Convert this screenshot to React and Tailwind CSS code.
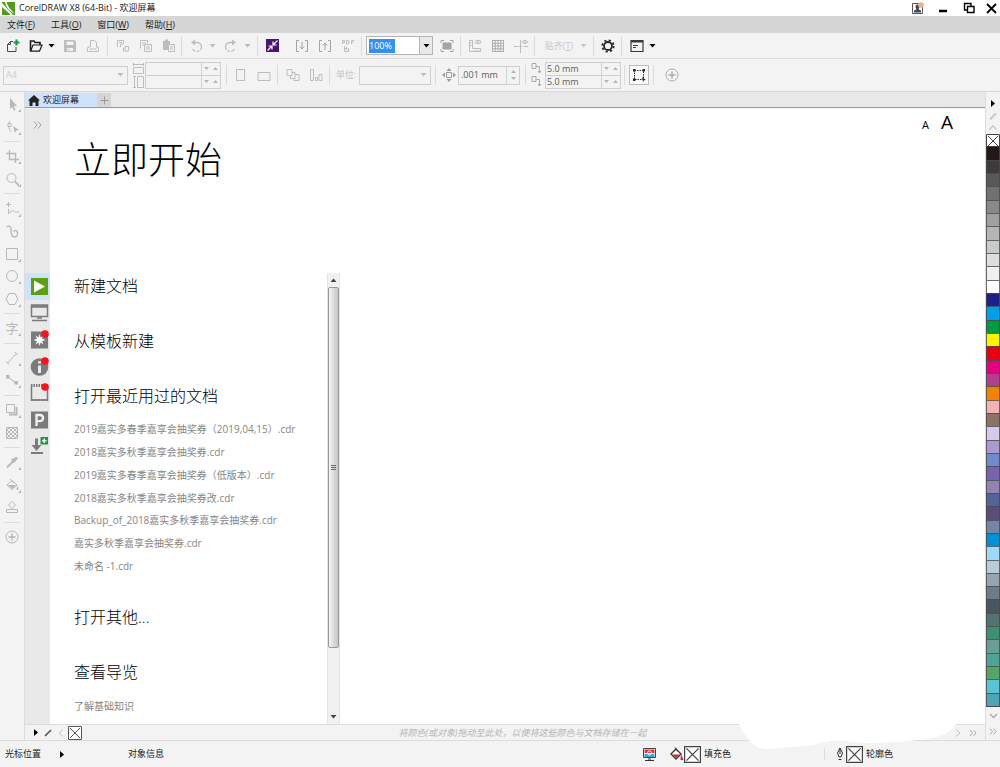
import React from "react";

const UI = "font-['Open_Sans','Noto_Sans_CJK_SC',sans-serif]";

function Svg({ w = 16, h = 16, box, className = "", children, sw = 1 }) {
  return (
    <svg
      width={w}
      height={h}
      viewBox={box || `0 0 ${w} ${h}`}
      className={`shrink-0 ${className}`}
      fill="none"
      stroke="currentColor"
      strokeWidth={sw}
      aria-hidden="true"
    >
      {children}
    </svg>
  );
}

const Caret = ({ className = "" }) => (
  <Svg w={7} h={4} className={className}>
    <path d="M0.5 0h6L3.5 3.5z" fill="currentColor" stroke="none" />
  </Svg>
);

const Sep = ({ className = "" }) => <span className={`w-px h-5 shrink-0 bg-[#dcdcdc] ${className}`} />;

function Tool({ label, className = "", tone = "text-[#bdbdbd]", children }) {
  return (
    <button type="button" aria-label={label} className={`w-[23px] h-6 shrink-0 flex items-center justify-center ${tone} ${className}`}>
      {children}
    </button>
  );
}

function CaretButton({ label, className = "" }) {
  return (
    <button type="button" aria-label={label} className={`w-2 h-6 shrink-0 flex items-center justify-center ${className}`}>
      <Caret />
    </button>
  );
}

function CrossBox({ size = 14, className = "" }) {
  return (
    <Svg w={size} h={size} box="0 0 14 14" className={`bg-white ${className}`}>
      <path d="M0.5 0.5h13v13h-13z" />
      <path d="M2 2l10 10M12 2L2 12" />
    </Svg>
  );
}

function TitleBar() {
  return (
    <header className="h-4 bg-white flex items-center justify-between">
      <div className="flex items-center gap-1 pl-[2px]">
        <Svg w={13} h={13}>
          <path d="M0 0h13v13H0z" fill="#4f9a1f" stroke="none" />
          <path d="M0 1l11 12H9L0 5z" fill="#fff" stroke="none" />
          <path d="M3 0h1.500c1 4 4 8 8 11.500C7.500 9.500 4 5 3 0z" fill="#fff" stroke="none" />
        </Svg>
        <h1 className="text-[9px] leading-4 text-[#1c1c1c]">CorelDRAW X8 (64-Bit) - 欢迎屏幕</h1>
      </div>
      <div className="flex items-center text-black">
        <button type="button" aria-label="登录" className="w-[26px] flex justify-center">
          <Svg w={13} h={13}>
            <path d="M1.5 1.5h10v10h-10z" stroke="#555" />
            <path d="M4.5 4.5a2 2 0 1 1 4 0c0 1-.8 1.700-.8 3l2.300 1v2H3v-2l2.300-1c0-1.300-.8-2-.8-3z" fill="#3d4a55" stroke="none" />
            <circle cx="10" cy="3" r="2.800" fill="#f0b08e" stroke="none" />
          </Svg>
        </button>
        <button type="button" aria-label="最小化" className="w-[26px] flex justify-center">
          <Svg w={10} h={14}><path d="M1 10h8" strokeWidth="2.500" /></Svg>
        </button>
        <button type="button" aria-label="还原" className="w-[26px] flex justify-center">
          <Svg w={12} h={12}>
            <path d="M4 8H1.500V1.500H8V4" strokeWidth="1.400" />
            <path d="M4.500 4.500h6.500v6h-6.500z" strokeWidth="1.400" />
          </Svg>
        </button>
        <button type="button" aria-label="关闭" className="w-[18px] flex justify-center">
          <Svg w={11} h={11}><path d="M1 1l9 9M10 1l-9 9" strokeWidth="1.800" /></Svg>
        </button>
      </div>
    </header>
  );
}

const MENUS = [["文件", "F"], ["工具", "O"], ["窗口", "W"], ["帮助", "H"]];

function MenuBar() {
  return (
    <nav className="h-[17px] bg-[#d6d6d6] flex items-center gap-4 pl-[7px] text-[9px] text-[#1c1c1c]">
      {MENUS.map(([name, key]) => (
        <button type="button" key={name} className="leading-4">
          {name}(<u>{key}</u>)
        </button>
      ))}
    </nav>
  );
}

function StandardBar() {
  return (
    <div className="h-[26px] bg-[#f3f3f3] border-b border-[#dcdcdc] flex items-center pl-px text-[#bdbdbd]">
      <Tool label="新建" tone="text-[#4a4a4a]">
        <Svg w={14} h={14}>
          <path d="M7 2.500H4.500L1.500 5.500v7h8.500V8M4.500 2.500v3h-3" />
          <path d="M10.500 0.500v6M7.500 3.500h6" stroke="#1f9d47" strokeWidth="2.200" />
        </Svg>
      </Tool>
      <Tool label="打开" tone="text-[#1c1c1c]">
        <Svg w={14} h={14}>
          <path d="M1.500 12V2h3.500l1 1.500h5V6" strokeWidth="1.600" />
          <path d="M1.500 12.200L4 6h9l-2.500 6.200z" strokeWidth="1.200" />
        </Svg>
      </Tool>
      <CaretButton label="最近打开" className="text-black" />
      <Tool label="保存" className="ml-[3px]">
        <Svg w={14} h={14}>
          <path d="M1 1h10.500L13 2.500V13H1z" fill="currentColor" stroke="none" />
          <path d="M3.500 2.500h7v3.500h-7zM4 9h6v3H4z" fill="#f3f3f3" stroke="none" />
          <path d="M5 10.500h2" />
        </Svg>
      </Tool>
      <Tool label="打印">
        <Svg w={14} h={14}>
          <path d="M4.500 8V1.500h4l2 2V8M4.500 8H2l-.5 1.500v3h11v-3L12 8h-1.500M3.500 10h7" />
        </Svg>
      </Tool>
      <Sep className="ml-[3px] mr-[3px]" />
      <Tool label="剪切">
        <Svg w={14} h={14}>
          <path d="M1.500 8V1.500h6V5h-3v3M3 3.500h3M9 7.500h3.500V12H9zM7.500 9v4" />
        </Svg>
      </Tool>
      <Tool label="复制">
        <Svg w={14} h={14}>
          <path d="M1.500 9.500v-8h7v3M3 4h4M3 6h2M5.500 5.500h7v7h-7zM7 8h4M7 10h4" />
        </Svg>
      </Tool>
      <Tool label="粘贴">
        <Svg w={14} h={14}>
          <path d="M1 2h7v3H6v6H1zM3 0.500h3V2H3z" fill="currentColor" stroke="none" />
          <path d="M6.500 5.500h6v7h-6zM8 8h3M8 10h3" />
        </Svg>
      </Tool>
      <Sep className="ml-px mr-[2px]" />
      <Tool label="撤销">
        <Svg w={14} h={14}>
          <path d="M4 3.500h4a4.500 4.500 0 0 1 0 9c-2 0-3.500-.8-4.500-2.500" strokeDasharray="14 1.500 2 1.500" strokeWidth="1.300" />
          <path d="M6 0.500v6l-4-3z" fill="currentColor" stroke="none" />
        </Svg>
      </Tool>
      <CaretButton label="撤销列表" className="ml-px" />
      <Tool label="重做" className="ml-[3px]">
        <Svg w={14} h={14}>
          <path d="M10 3.500H6a4.500 4.500 0 0 0 0 9c2 0 3.500-.8 4.500-2.500" strokeDasharray="14 1.500 2 1.500" strokeWidth="1.300" />
          <path d="M8 0.500v6l4-3z" fill="currentColor" stroke="none" />
        </Svg>
      </Tool>
      <CaretButton label="重做列表" className="ml-px" />
      <Sep className="ml-[6px] mr-[3px]" />
      <Tool label="搜索内容">
        <Svg w={13} h={13}>
          <path d="M0 0h13v13H0z" fill="#4b1472" stroke="none" />
          <path d="M11.500 1.500L7.500 5.500M7 2.500V6h3.500M1.500 11.500l4-4M6 10.500V7H2.500" stroke="#fff" strokeWidth="1.200" />
        </Svg>
      </Tool>
      <Tool label="导入" className="ml-[6px]" tone="text-[#a3a3a3]">
        <Svg w={14} h={14}><path d="M4 1.500H1.500v11H4M10 1.500h2.500v11H10M7 3v7M4.800 7.500L7 10l2.200-2.500" /></Svg>
      </Tool>
      <Tool label="导出" tone="text-[#a3a3a3]">
        <Svg w={14} h={14}><path d="M4 1.500H1.500v11H4M10 1.500h2.500v11H10M7 11V4M4.800 6.500L7 4l2.200 2.500" /></Svg>
      </Tool>
      <Tool label="发布为 PDF">
        <Svg w={14} h={14}>
          <path d="M1.500 5V1.500h2v2h-2M5.500 1v4h1.500l1-1V2L7 1.500H5.500M10.500 5V1.500H13M10.500 3.200H12.500M3.500 7v5.500h4V9M5.500 8v3M3.500 9.500h2" />
        </Svg>
      </Tool>
      <Sep className="ml-[2px] mr-1" />
      <div className="flex h-[19px] w-[67px] border border-[#b5b5b5] bg-white">
        <div className="flex flex-1 items-center">
          <input
            type="text"
            aria-label="缩放级别"
            defaultValue="100%"
            className="ml-[2px] h-[14px] w-[26px] bg-[#3390f2] p-0 text-[9px] leading-[14px] text-white outline-none"
          />
        </div>
        <button type="button" aria-label="缩放列表" className="flex w-[13px] items-center justify-center border-l border-[#b5b5b5] bg-[#e9e9e9] text-black">
          <Caret />
        </button>
      </div>
      <Tool label="全屏预览" className="ml-[2px]" tone="text-[#a3a3a3]">
        <Svg w={14} h={14}>
          <path d="M3 4h8v6H3z" fill="currentColor" />
          <path d="M1 4V1.500h3M10 1.500h3V4M13 10v2.500h-3M4 12.500H1V10" />
        </Svg>
      </Tool>
      <Sep className="ml-[2px] mr-[2px]" />
      <Tool label="标尺">
        <Svg w={14} h={14}>
          <path d="M1.500 1.500h3v8h8v3h-11zM2 4h1.500M2 6.500h1.500M6 11v1M8.500 11v1M11 11v1" />
          <ellipse cx="10" cy="3" rx="3" ry="1.700" /><circle cx="10" cy="3" r=".6" />
        </Svg>
      </Tool>
      <Tool label="网格" tone="text-[#adadad]">
        <Svg w={14} h={14}>
          <path d="M1.500 1v12M4.250 1v12M7 1v12M9.750 1v12M12.500 1v12M1 1.500h12M1 4.250h12M1 7h12M1 9.750h12M1 12.500h12" />
        </Svg>
      </Tool>
      <Tool label="辅助线">
        <Svg w={14} h={14}>
          <path d="M6.500 1v13M0 7.500h4M5 7.500h3M9.500 7.500H14" />
          <ellipse cx="11" cy="3" rx="2.500" ry="1.500" /><circle cx="11" cy="3" r=".5" />
        </Svg>
      </Tool>
      <Sep className="ml-[2px] mr-[7px]" />
      <button type="button" className="flex items-center gap-1 text-[9px] text-[#c8c8c8]">
        <span className="w-[34px] whitespace-nowrap">贴齐(<u>T</u>)</span>
        <Caret />
      </button>
      <Sep className="ml-[6px] mr-[2px]" />
      <Tool label="选项" tone="text-[#2a2a2a]">
        <Svg w={14} h={14}>
          <circle cx="7" cy="7" r="4" strokeWidth="1.800" />
          <circle cx="7" cy="7" r="5.700" strokeWidth="1.800" strokeDasharray="2.200 2.277" />
        </Svg>
      </Tool>
      <Sep className="ml-[2px] mr-[3px]" />
      <Tool label="应用程序启动器" tone="text-[#3a3a3a]">
        <Svg w={14} h={14}>
          <path d="M1 1.500h12v11H1z" strokeWidth="1.200" />
          <path d="M1 2.500h12" strokeWidth="2" />
          <path d="M3 6.500h5M3 8.500h3" />
        </Svg>
      </Tool>
      <CaretButton label="启动器列表" className="text-black" />
    </div>
  );
}

function Steps() {
  return (
    <span className="flex w-[19px] items-center justify-around border-l border-[#d2d2d2]">
      <Svg w={5} h={3}><path d="M0 0h5L2.500 3z" fill="currentColor" stroke="none" /></Svg>
      <Svg w={5} h={3}><path d="M0 3h5L2.500 0z" fill="currentColor" stroke="none" /></Svg>
    </span>
  );
}

function Pair({ labels, values }) {
  return (
    <div className="flex h-[27px] w-[76px] flex-col divide-y divide-[#cfcfcf] border border-[#cfcfcf] text-[#b5b5b5]">
      {labels.map((l, i) => (
        <div key={l} className="flex min-h-0 flex-1">
          <input aria-label={l} type="text" defaultValue={values[i]} className="h-3 min-h-0 min-w-0 flex-1 bg-transparent px-px text-[9px] leading-3 text-[#5d5d5d] outline-none" />
          <Steps />
        </div>
      ))}
    </div>
  );
}

function PropertyBar() {
  return (
    <div className="flex h-[33px] items-center border-b border-[#d8d8d8] bg-[#f3f3f3] pl-[3px] text-[#bdbdbd]">
      <div className="grid h-[19px] w-[125px] items-center border border-[#cfcfcf]">
        <select aria-label="页面大小" disabled className="col-start-1 row-start-1 h-[17px] w-full appearance-none px-[2px] text-[9px] leading-4 text-[#cccccc]">
          <option>A4</option>
        </select>
        <Caret className="col-start-1 row-start-1 justify-self-end mr-[3px]" />
      </div>
      <div className="ml-[5px] mr-px flex flex-col gap-px">
        <Svg w={11} h={12}><path d="M0.500 4.500h10v6h-10zM0.500 0v3M10.500 0v3M1 1.500h9" /></Svg>
        <Svg w={11} h={12}><path d="M4.500 0.500h6v11h-6zM0 0.500h3M0 11.500h3M1.500 1v10" /></Svg>
      </div>
      <Pair labels={["页面宽度", "页面高度"]} values={["", ""]} />
      <Sep className="ml-[5px] mr-[2px]" />
      <Tool label="纵向"><Svg w={14} h={14}><path d="M2.500 1.500h8v11h-8z" /></Svg></Tool>
      <Tool label="横向"><Svg w={14} h={14}><path d="M1 4.500h12v8H1z" /></Svg></Tool>
      <Sep className="ml-[2px] mr-[3px]" />
      <Tool label="所有页面"><Svg w={14} h={14}><path d="M1 1.500h5v6H1zM6 4.500h3v6H4.500v-3M9 6.500h4v6H8v-2" /></Svg></Tool>
      <Tool label="当前页面"><Svg w={14} h={14}><path d="M1.500 1.500h3v11h-3zM6.500 9.500h2v3h-2zM10 6.500h3v6h-3z" /></Svg></Tool>
      <Sep className="ml-[2px] mr-[6px]" />
      <label htmlFor="unit" className="w-[23px] whitespace-nowrap text-[9px] text-[#c4c4c4]">单位:</label>
      <div className="grid h-[19px] w-[72px] items-center border border-[#cfcfcf]">
        <select id="unit" disabled className="col-start-1 row-start-1 h-[17px] w-full appearance-none px-1 text-[9px]" />
        <Caret className="col-start-1 row-start-1 justify-self-end mr-[3px]" />
      </div>
      <Sep className="ml-1 mr-[6px]" />
      <Svg w={14} h={14} className="text-[#9d9d9d]">
        <path d="M4.500 4.500h5v5h-5z" />
        <path d="M7 0l2.500 3h-5zM7 14l2.500-3h-5zM0 7l3-2.500v5zM14 7l-3-2.500v5z" fill="currentColor" stroke="none" />
      </Svg>
      <div className="ml-[2px] flex h-[19px] w-[62px] border border-[#cfcfcf] text-[#b5b5b5]">
        <input aria-label="微调距离" type="text" defaultValue=".001 mm" className="min-w-0 flex-1 bg-transparent px-[2px] text-[9px] text-[#5d5d5d] outline-none" />
        <span className="flex w-[13px] flex-col items-center justify-around border-l border-[#d2d2d2] py-[2px]">
          <Svg w={5} h={3}><path d="M0 3h5L2.500 0z" fill="currentColor" stroke="none" /></Svg>
          <Svg w={5} h={3}><path d="M0 0h5L2.500 3z" fill="currentColor" stroke="none" /></Svg>
        </span>
      </div>
      <Sep className="ml-[5px] mr-[5px]" />
      <div className="mr-[2px] flex flex-col gap-[2px] text-[#a9a9a9]">
        <Svg w={12} h={11}><path d="M1 0.500h4v5H1zM5.500 3.500h3v3M8.500 6.500v3M7 8l1.500 2L10 8" /></Svg>
        <Svg w={12} h={11}><path d="M1 0.500h4v5H1zM5.500 3.500h3v3M8.500 6.500v3M7 8l1.500 2L10 8" /></Svg>
      </div>
      <Pair labels={["再制水平偏移", "再制垂直偏移"]} values={["5.0 mm", "5.0 mm"]} />
      <Sep className="ml-[3px] mr-1" />
      <button type="button" aria-label="所有对象视为已填充" className="flex size-[20px] items-center justify-center border border-[#bdbdbd] bg-[#fafafa] text-[#2a2a2a]">
        <Svg w={14} h={14}>
          <path d="M2.500 2.500h9v9h-9z" strokeDasharray="1.500 1" />
          <path d="M1 1h2.500v2.500H1zM10.500 1H13v2.500h-2.500zM1 10.500h2.500V13H1zM10 9l4 3-2 .3L11 14z" fill="currentColor" stroke="none" />
        </Svg>
      </button>
      <Sep className="ml-1 mr-[6px]" />
      <Tool label="自定义" tone="text-[#adadad]">
        <Svg w={14} h={14}><circle cx="7" cy="7" r="6" /><path d="M7 3.500v7M3.500 7h7" strokeWidth="1.500" /></Svg>
      </Tool>
    </div>
  );
}

const TOOLBOX = [
  ["选择", <path d="M5 1l7 8H9l1.500 4-1.500.8L7.200 10 5 12z" fill="currentColor" stroke="none" />, 1],
  ["形状", <><path d="M5 1C2.500 4 3 8 6.500 12" /><path d="M3 3.500h3v3H3z" fill="#f3f3f3" /><path d="M8 6l6 4-3 .5-1 2.500z" fill="currentColor" stroke="none" /></>, 1],
  null,
  ["裁剪", <path d="M4.500 1v9.500H14M1 4.500h9.500V14" strokeWidth="1.400" />, 1],
  ["缩放", <><circle cx="6.500" cy="6" r="4.500" /><path d="M10 9.500l4 4" strokeWidth="1.800" /></>, 1],
  null,
  ["手绘", <path d="M3.500 0v5M1 2.500h5M3.500 7v4.500c2 0 2-3 4-3s1.500 2 4 1.500H14" />, 1],
  ["艺术笔", <path d="M1.500 3c3-2 4.500-.5 4.500 2.500 0 5 1 7.500 3.500 7.500S13 11 12.500 8.500 9.500 5.500 9 8" strokeWidth="1.400" />, 0],
  ["矩形", <path d="M1.500 1.500h11v11h-11z" />, 1],
  ["椭圆形", <circle cx="7" cy="7" r="5.500" />, 1],
  ["多边形", <path d="M4 1.500h6L12.800 7 10 12.500H4L1.200 7z" />, 1],
  null,
  ["文本", "字", 1],
  null,
  ["平行度量", <path d="M2.500 12L11.500 2.500M1 10.500l3 3M10 1l3 3" />, 1],
  ["连接器", <><path d="M3 4l8.500 6.500" /><path d="M1 2h3.500v3.500H1zM9.500 8H13v3.500H9.500z" fill="currentColor" stroke="none" /></>, 1],
  null,
  ["阴影", <><path d="M1.500 1.500h8v8h-8z" /><path d="M4 11.500h7.500V4" strokeWidth="2" /></>, 1],
  ["透明度", <path d="M1.500 1.500h11v11h-11zM2 4l2-2M2 8l6-6M2 12L12 2M6 12l6-6M10 12l2-2M4 2l8 8M8 2l4 4M2 4l8 8M2 8l4 4" />, 0],
  null,
  ["颜色滴管", <><path d="M2 12.500l6.500-6.500" strokeWidth="2" /><path d="M7 4l3 3M9 5.500l3-3" strokeWidth="3" /></>, 1],
  ["交互式填充", <><path d="M2 7l5-4.500 5 4.500-5 4.500zM5 1l4 4" /><path d="M3 7h8l-4 4zM12.500 8c1.500 3 1 4 0 4s-1.500-1 0-4z" fill="currentColor" stroke="none" /></>, 1],
  ["智能填充", <path d="M3.500 5L7 1.500 10.500 5 7 8.500zM1.500 9.500h11v3h-11z" />, 0],
  null,
  ["添加工具", <><circle cx="7" cy="7" r="6" /><path d="M7 3.500v7M3.500 7h7" strokeWidth="1.400" /></>, 0],
];

function Toolbox() {
  return (
    <aside className="w-[25px] shrink-0 border-r border-[#dcdcdc] bg-[#f3f3f3] pt-px">
      <div className="flex h-[455px] flex-col">
        {TOOLBOX.map((t, i) =>
          t ? (
            <button key={i} type="button" aria-label={t[0]} className="flex min-h-0 flex-1 items-center justify-center text-[#b8b8b8]">
              <span className="relative flex size-[14px] items-center justify-center">
                {typeof t[1] === "string" ? <span className="text-[13px] leading-[14px]">{t[1]}</span> : <Svg w={14} h={14}>{t[1]}</Svg>}
                {t[2] ? (
                  <Svg w={3} h={3} className="absolute -bottom-px -right-[2px]"><path d="M3 0v3H0z" fill="#b5b5b5" stroke="none" /></Svg>
                ) : null}
              </span>
            </button>
          ) : (
            <span key={i} className="mx-1 my-[3px] h-px shrink-0 bg-[#dcdcdc]" />
          )
        )}
      </div>
    </aside>
  );
}

const Dot = () => <circle cx="15" cy="4" r="3.800" fill="#f8121b" stroke="none" />;

const PAGES = [
  ["立即开始", <><path d="M1 1h17v17H1z" fill="#5ba013" stroke="none" /><path d="M4 3.500v12l11-6z" fill="#fff" stroke="none" /></>],
  ["工作区", <><path d="M1.500 2h16v11.500h-16z" strokeWidth="1.500" /><path d="M1 3.500h17" strokeWidth="2.500" /><path d="M7 15h5M2 17.500h15" strokeWidth="1.500" /></>],
  ["新增功能", <><path d="M1 1.500h17v17H1z" fill="currentColor" stroke="none" /><path d="M9.500 4l1 3.500 3-2-1.500 3.200 3.500 1.300-3.500 1.300 1.500 3.200-3-2-1 3.500-1-3.500-3 2L7 11.300 3.500 10 7 8.700 5.500 5.500l3 2z" fill="#fff" stroke="none" /><Dot /></>],
  ["需要帮助", <><circle cx="9.500" cy="10" r="8.800" fill="currentColor" stroke="none" /><path d="M9.500 8.500V16M9.500 4.200v2.300" stroke="#e9e9e9" strokeWidth="3" /><Dot /></>],
  ["画廊", <><path d="M1.500 2v16M17.500 2v16M1.500 17h16" strokeWidth="1.500" /><path d="M1 2.500h17" strokeWidth="3" strokeDasharray="1.500 1" /><path d="M1 17h17" strokeWidth="2" strokeDasharray="1.500 1" /><Dot /></>],
  ["更新", <><path d="M1 1.500h17v17H1z" fill="currentColor" stroke="none" /><path d="M6.500 16V5h3.500a3 3 0 0 1 0 6.200H6.500" stroke="#f3f3f3" strokeWidth="2.300" /></>],
  ["获取更多", <><path d="M6.500 2.500v10" strokeWidth="3" /><path d="M1.500 9h10l-5 6z" fill="currentColor" stroke="none" /><path d="M1 17h12" strokeWidth="2" /><path d="M10.500 1H18v7.500h-7.500z" fill="#169b3f" stroke="none" /><path d="M14.250 2.500v4.500M12 4.750h4.500" stroke="#fff" strokeWidth="1.500" /></>],
];

function PageRail() {
  return (
    <nav className="flex w-[25px] shrink-0 flex-col bg-[#e9e9e9]">
      <button type="button" aria-label="展开" className="mb-[133px] flex h-[31px] items-center justify-center text-[#a0a0a0]">
        <Svg w={9} h={8}><path d="M1 0.500L4 4 1 7.500M5 0.500L8 4 5 7.500" /></Svg>
      </button>
      <div className="flex h-[186px] flex-col">
        {PAGES.map(([label, art], i) => (
          <button key={label} type="button" aria-label={label} className={`flex min-h-0 flex-1 items-center justify-center pl-[3px] text-[#7b7b7b] ${i === 0 ? "bg-[#cfe2fc]" : ""}`}>
            <Svg w={19} h={19}>{art}</Svg>
          </button>
        ))}
      </div>
    </nav>
  );
}

const RECENT = [
  "2019嘉实多春季嘉享会抽奖券（2019,04,15）.cdr",
  "2018嘉实多秋季嘉享会抽奖券.cdr",
  "2019嘉实多春季嘉享会抽奖券（低版本）.cdr",
  "2018嘉实多秋季嘉享会抽奖券改.cdr",
  "Backup_of_2018嘉实多秋季嘉享会抽奖券.cdr",
  "嘉实多秋季嘉享会抽奖券.cdr",
  "未命名 -1.cdr",
];

const Entry = ({ children }) => (
  <h3 className="h-[27px] text-[16px] font-light leading-[27px] text-black">
    <a href="#">{children}</a>
  </h3>
);

function Welcome() {
  return (
    <main className="flex min-w-0 flex-1 flex-col bg-white">
      <div className="flex h-[164px] items-start justify-between pl-6 pr-8">
        <h2 className="pt-6 text-[37px] font-light leading-[54px] text-black">立即开始</h2>
        <div className="flex items-baseline gap-3 text-black">
          <button type="button" aria-label="缩小文字" className="text-[11px]">A</button>
          <button type="button" aria-label="放大文字" className="text-[19px] leading-[26px]">A</button>
        </div>
      </div>
      <div className="flex w-[290px] flex-1">
        <div className="flex flex-1 flex-col whitespace-nowrap pl-6">
          <div className="flex flex-col gap-7">
            <Entry>新建文档</Entry>
            <Entry>从模板新建</Entry>
            <Entry>打开最近用过的文档</Entry>
          </div>
          <ul className="mt-2 flex h-[159px] flex-col text-[10px] text-[#858585]">
            {RECENT.map((r) => (
              <li key={r} className="flex flex-1 items-center leading-4"><a href="#">{r}</a></li>
            ))}
          </ul>
          <div className="mt-[27px] flex flex-col gap-7">
            <Entry>打开其他...</Entry>
            <Entry>查看导览</Entry>
          </div>
          <a href="#" className="mt-2 text-[10px] leading-6 text-[#858585]">了解基础知识</a>
        </div>
        <div className="flex w-[13px] flex-col items-center border-x border-[#e4e4e4] bg-[#f1f1f1] text-[#444]">
          <button type="button" aria-label="向上滚动" className="flex h-[14px] items-center">
            <Caret className="rotate-180" />
          </button>
          <div className="flex w-full grow-[361] items-center justify-center rounded-[2px] border border-[#999] bg-linear-to-r from-[#f5f5f5] to-[#c4c4c4]">
            <Svg w={5} h={6} className="text-[#666]"><path d="M0 0.500h5M0 2.500h5M0 4.500h5" /></Svg>
          </div>
          <span className="grow-[63]" />
          <button type="button" aria-label="向下滚动" className="flex h-[14px] items-center">
            <Caret />
          </button>
        </div>
      </div>
    </main>
  );
}

const SWATCHES = [
  "#231815", "#3e3a39", "#595757", "#727171", "#898989", "#9fa0a0", "#b5b5b6", "#c9caca", "#dcdddd", "#efefef", "#ffffff",
  "#1d2088", "#00a0e9", "#009944", "#fff100", "#e60012", "#e4007f", "#b03f8c", "#f08300", "#f5b2b2", "#8c7367",
  "#d5cbe8", "#a99bcd", "#6f8bcd", "#7664ae", "#9382b0", "#51659a", "#5b4d78", "#7486a4", "#0090d8", "#a0d8fa",
  "#b8cbd8", "#95a5b0", "#6d7c88", "#4a5560", "#54726f", "#3f8e75", "#6b9c96", "#4fa595", "#55a568", "#5cc3d6", "#4ba5b3",
];

function Palette() {
  return (
    <aside className="flex w-[15px] shrink-0 flex-col border-l border-[#dcdcdc] bg-[#f3f3f3]">
      <div className="flex h-[42px] flex-col items-center justify-between pb-1 pt-2 text-[#c4c4c4]">
        <Svg w={4} h={7} className="text-black"><path d="M0 0l4 3.500L0 7z" fill="currentColor" stroke="none" /></Svg>
        <Svg w={8} h={7}><path d="M1 6.500l3-3M4 3l3-2.500" strokeWidth="1.800" /></Svg>
        <Svg w={8} h={5}><path d="M0.500 4.500L4 1l3.500 3.500" strokeWidth="1.300" /></Svg>
      </div>
      <div className="flex flex-1 flex-col border-b border-[#4a4a4a]">
        <button type="button" aria-label="无填充" className="flex min-h-0 flex-1 text-[#444]"><CrossBox /></button>
        {SWATCHES.map((c) => (
          <button key={c} type="button" aria-label={c} className="min-h-0 flex-1 border border-b-0 border-[#4a4a4a]/80" style={{ backgroundColor: c }} />
        ))}
      </div>
      <div className="flex h-[33px] flex-col items-center justify-around py-px text-[#a9a9a9]">
        <Svg w={9} h={6}><path d="M1 1l3.500 3.500L8 1" strokeWidth="1.300" /></Svg>
        <Svg w={8} h={7}><path d="M1 0.500l2.500 3L1 6.500M4.500 0.500l2.500 3-2.500 3" /></Svg>
      </div>
    </aside>
  );
}

function DocumentPalette() {
  return (
    <div className="flex h-4 items-center border-t border-[#dcdcdc] bg-[#f3f3f3] pl-[9px] pr-2">
      <Svg w={4} h={7} className="text-black"><path d="M0 0l4 3.500L0 7z" fill="currentColor" stroke="none" /></Svg>
      <Svg w={8} h={8} className="ml-[6px] text-[#555]"><path d="M1 7l3.500-3.500M4 4l3-3" strokeWidth="1.600" /></Svg>
      <Svg w={6} h={8} className="ml-[6px] text-[#c4c4c4]"><path d="M5 0.500L1 4l4 3.500" /></Svg>
      <CrossBox className="ml-1 text-[#555]" />
      <p className="flex-1 pl-2 text-center text-[9px] italic leading-3 text-[#b5b5b5]">
        将颜色(或对象)拖动至此处，以便将这些颜色与文档存储在一起
      </p>
      <Svg w={6} h={8} className="text-[#bdbdbd]"><path d="M1 0.500L5 4 1 7.500" /></Svg>
      <Svg w={8} h={8} className="ml-2 text-[#a9a9a9]"><path d="M1 1l2.500 3L1 7M4.500 1L7 4 4.500 7" /></Svg>
    </div>
  );
}

function StatusBar() {
  return (
    <footer className="flex h-[27px] items-center border-t border-[#dcdcdc] bg-[#f3f3f3] pl-[5px] text-[9px] text-[#222]">
      <span className="w-[55px] whitespace-nowrap">光标位置</span>
      <Svg w={4} h={7} className="text-black"><path d="M0 0l4 3.500L0 7z" fill="currentColor" stroke="none" /></Svg>
      <span className="ml-16">对象信息</span>
      <div className="ml-auto flex w-[357px] items-center">
        <Svg w={13} h={13}>
          <path d="M0.500 0.500h12v9h-12z" fill="#fff" stroke="#444" />
          <path d="M1.500 1.500h10v3.500h-10z" fill="#e8333c" stroke="none" />
          <path d="M1.500 6h10v3h-10z" fill="#36a8dd" stroke="none" />
          <circle cx="6.500" cy="5" r="2" stroke="#fff" />
          <path d="M2 12.500h9M5 11h3" stroke="#333" />
        </Svg>
        <Svg w={14} h={14} className="ml-[14px]">
          <path d="M1 7l5-5 5 5-5 5z" fill="#fff" stroke="#333" strokeWidth="1.300" />
          <path d="M2.500 7.500h7L6 11z" fill="#d9222b" stroke="none" />
          <path d="M5 0.500l3 4" stroke="#333" />
          <path d="M11 7l2.500 6h-3z" fill="#d9222b" stroke="none" />
        </Svg>
        <CrossBox size={17} className="text-[#444]" />
        <span className="ml-[3px] w-[120px]">填充色</span>
        <span className="h-3 w-px bg-[#dcdcdc]" />
        <Svg w={8} h={14} className="ml-[11px] text-[#333]">
          <path d="M4 1L1.500 6 3 10h2l1.500-4zM4 1v6M2.500 12.500h3" />
        </Svg>
        <CrossBox size={17} className="ml-[2px] text-[#444]" />
        <span className="ml-[3px]">轮廓色</span>
      </div>
    </footer>
  );
}

export default function App() {
  return (
    <div className={`relative flex min-h-screen flex-col overflow-hidden bg-[#f3f3f3] ${UI}`}>
      <TitleBar />
      <MenuBar />
      <StandardBar />
      <PropertyBar />
      <div className="flex flex-1">
        <Toolbox />
        <div className="flex min-w-0 flex-1 flex-col">
          <div className="flex h-4 items-stretch border-b border-[#45b8ea] bg-[#e8e8e8] pt-px">
            <button type="button" className="flex w-[72px] items-center gap-[3px] bg-[#cfe2fc] pl-[3px] text-[9px] leading-3 text-[#1c1c1c]">
              <Svg w={12} h={11}><path d="M6 0l6 5.500h-1.500V11h-3V7.500h-3V11h-3V5.500H0z" fill="#222" stroke="none" /></Svg>
              欢迎屏幕
            </button>
            <button type="button" aria-label="新标签" className="flex w-[14px] items-center justify-center bg-[#d5d5d5] text-[#999]">
              <Svg w={9} h={9}><path d="M4.500 0.500v8M0.500 4.500h8" /></Svg>
            </button>
          </div>
          <div className="flex flex-1 pt-px">
            <PageRail />
            <Welcome />
          </div>
          <DocumentPalette />
        </div>
        <Palette />
      </div>
      <StatusBar />
      <Svg w={222} h={32} className="absolute bottom-[14px] right-[40px]">
        <path d="M0 0C2 6 5 11 12 20c5 6 12 9 22 8s28-3 42-4c8-2 12-4 20-4 12-1 26 3 42 2 20-1 36-2 52-4 14-2 24-8 30-17z" fill="#fff" stroke="none" />
      </Svg>
    </div>
  );
}
